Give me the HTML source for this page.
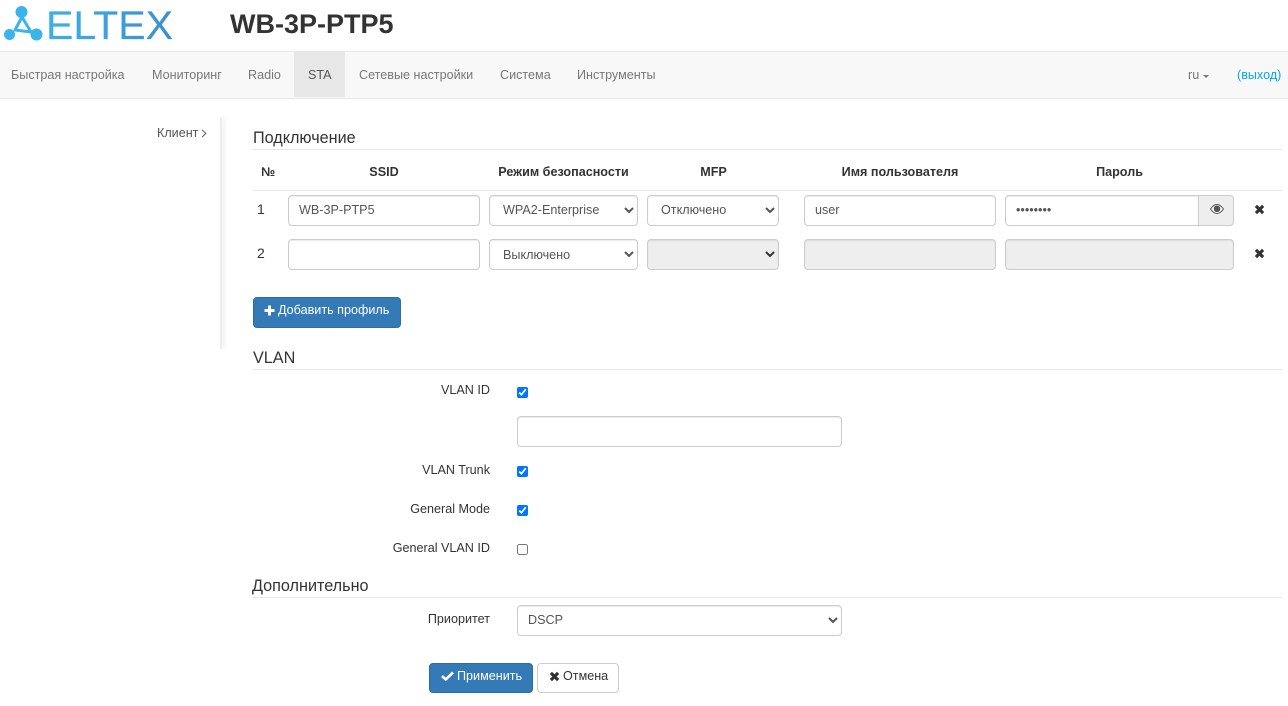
<!DOCTYPE html>
<html><head><meta charset="utf-8">
<style>
*{box-sizing:border-box}
html,body{margin:0;padding:0;background:#fff;width:1288px;height:706px;overflow:hidden}
body{font-family:"Liberation Sans",sans-serif;font-size:12.6px;color:#333;position:relative}
.a{position:absolute;white-space:nowrap}
.nav{position:absolute;left:0;top:51px;width:1288px;height:48px;background:#f8f8f8;border-top:1px solid #e7e7e7;border-bottom:1px solid #e7e7e7}
.n{position:absolute;top:67px;color:#777;line-height:16px}
.h{position:absolute;font-size:16.2px;line-height:18px;color:#333;white-space:nowrap}
.hr{position:absolute;left:253px;width:1029px;height:1px;background:#e5e5e5}
.th{position:absolute;top:164px;font-weight:bold;line-height:16px;text-align:center;white-space:nowrap}
.c{position:absolute;border:1px solid #ccc;border-radius:4px;background:#fff;box-shadow:inset 0 1px 1px rgba(0,0,0,.075);font:12.6px "Liberation Sans",sans-serif;color:#555;padding:0 10px;height:31px;margin:0;outline:0}
select.c{padding:0 9px}
select.c:disabled{opacity:1;color:#333}
.c.up{padding-bottom:2px}
.dis{background:#eee}
.l{position:absolute;right:798px;text-align:right;line-height:16px;white-space:nowrap}
input[type=checkbox]{position:absolute;left:517px;width:11px;height:11px;margin:0}
.x{position:absolute;left:1254px;width:11px;height:11px}
.btn{position:absolute;border-radius:4px;line-height:16px;white-space:nowrap}
.p{background:#337ab7;border:1px solid #2e6da4;color:#fff}
.num{position:absolute;left:257px;line-height:16px;font-size:14px}
</style></head><body>
<svg class="a" style="left:0;top:0" width="180" height="50" viewBox="0 0 180 50">
<defs><linearGradient id="g" x1="46" x2="174" y1="0" y2="0" gradientUnits="userSpaceOnUse"><stop offset="0" stop-color="#3fb0e8"/><stop offset="1" stop-color="#3a8fd0"/></linearGradient></defs>
<path d="M22 17L15 30L31 32Z" fill="none" stroke="#3bb4ec" stroke-width="3" stroke-linejoin="round"/>
<g fill="#3bb4ec"><circle cx="21.500" cy="12" r="6"/><circle cx="9.500" cy="34.500" r="5.500"/><circle cx="36.500" cy="34.500" r="6"/></g>
<text x="46" y="39" font-family="Liberation Sans" font-size="40" fill="url(#g)" stroke="url(#g)" stroke-width=".15" textLength="127" lengthAdjust="spacingAndGlyphs">ELTEX</text>
</svg>
<div class="a" style="left:230px;top:9px;font-size:27px;font-weight:bold;line-height:30px;color:#333">WB-3P-PTP5</div>

<div class="nav"></div>
<div class="a" style="left:294px;top:52px;width:51px;height:45px;background:#e7e7e7"></div>
<div class="n" style="left:11px">Быстрая настройка</div>
<div class="n" style="left:152px">Мониторинг</div>
<div class="n" style="left:248px">Radio</div>
<div class="n" style="left:308px;color:#555">STA</div>
<div class="n" style="left:359px">Сетевые настройки</div>
<div class="n" style="left:500px">Система</div>
<div class="n" style="left:577px">Инструменты</div>
<div class="n" style="left:1188px">ru</div>
<div class="a" style="left:1203px;top:75px;width:0;height:0;border-left:3.500px solid transparent;border-right:3.500px solid transparent;border-top:3.500px solid #777"></div>
<div class="n" style="left:1237px;color:#03a9f4">(выход)</div>

<div class="a" style="left:157px;top:125px;line-height:16px;color:#555">Клиент</div>
<svg class="a" style="left:201px;top:129px" width="6" height="9" viewBox="0 0 6 9"><path d="M1 .8L4.800 4.500L1 8.200" fill="none" stroke="#555" stroke-width="1"/></svg>
<div class="a" style="left:220px;top:117px;width:2px;height:232px;background:#eee;box-shadow:2px 0 4px rgba(0,0,0,.1)"></div>

<div class="h" style="left:253px;top:129px">Подключение</div>
<div class="hr" style="top:149px"></div>
<div class="th" style="left:261px">№</div>
<div class="th" style="left:288px;width:192px">SSID</div>
<div class="th" style="left:489px;width:149px">Режим безопасности</div>
<div class="th" style="left:647px;width:133px">MFP</div>
<div class="th" style="left:804px;width:192px">Имя пользователя</div>
<div class="th" style="left:1005px;width:229px">Пароль</div>
<div class="hr" style="top:190px"></div>

<div class="num" style="top:201px">1</div>
<input class="c up" style="left:288px;top:195px;width:192px" value="WB-3P-PTP5">
<select class="c up" style="left:489px;top:195px;width:149px"><option>WPA2-Enterprise</option></select>
<select class="c up" style="left:647px;top:195px;width:132px"><option>Отключено</option></select>
<input class="c up" style="left:804px;top:195px;width:192px" value="user">
<input class="c up" type="password" style="left:1005px;top:195px;width:194px;border-radius:4px 0 0 4px" value="12345678">
<div class="c dis" style="left:1198px;top:195px;width:36px;border-radius:0 4px 4px 0;box-shadow:none"></div>
<svg class="a" style="left:1210px;top:204px" width="14" height="10" viewBox="0 0 14 10"><path d="M.5 5C3 1.500 5 .5 7 .5S11 1.500 13.500 5C11 8.500 9 9.500 7 9.500S3 8.500 .5 5Z" fill="#fff" stroke="#555" stroke-width="1"/><circle cx="7" cy="4.800" r="3.300" fill="#555"/></svg>
<svg class="x" style="top:204px" viewBox="0 0 11 11"><path d="M1.500 3L3 1.500L5.500 4L8 1.500L9.500 3L7 5.500L9.500 8L8 9.500L5.500 7L3 9.500L1.500 8L4 5.500Z" fill="#333" stroke="#333" stroke-width="1"/></svg>

<div class="num" style="top:245px">2</div>
<input class="c" style="left:288px;top:239px;width:192px">
<select class="c" style="left:489px;top:239px;width:149px"><option>Выключено</option></select>
<select class="c dis" style="left:647px;top:239px;width:132px" disabled><option></option></select>
<input class="c dis" style="left:804px;top:239px;width:192px" disabled>
<input class="c dis" style="left:1005px;top:239px;width:229px" disabled>
<svg class="x" style="top:248px" viewBox="0 0 11 11"><path d="M1.500 3L3 1.500L5.500 4L8 1.500L9.500 3L7 5.500L9.500 8L8 9.500L5.500 7L3 9.500L1.500 8L4 5.500Z" fill="#333" stroke="#333" stroke-width="1"/></svg>

<div class="btn p" style="left:253px;top:297px;width:148px;height:31px"></div>
<svg class="a" style="left:264px;top:305px" width="11" height="11" viewBox="0 0 11 11"><path d="M4 .5H7V4H10.500V7H7V10.500H4V7H.5V4H4Z" fill="#fff"/></svg>
<div class="a" style="left:278px;top:302px;line-height:16px;color:#fff">Добавить профиль</div>

<div class="h" style="left:253px;top:349px">VLAN</div>
<div class="hr" style="top:369px"></div>
<div class="l" style="top:382px">VLAN ID</div>
<input type="checkbox" checked style="top:387px">
<input class="c" style="left:517px;top:416px;width:325px">
<div class="l" style="top:462px">VLAN Trunk</div>
<input type="checkbox" checked style="top:466px">
<div class="l" style="top:501px">General Mode</div>
<input type="checkbox" checked style="top:505px">
<div class="l" style="top:540px">General VLAN ID</div>
<input type="checkbox" style="top:544px">

<div class="h" style="left:252px;top:577px">Дополнительно</div>
<div class="hr" style="top:597px"></div>
<div class="l" style="top:611px">Приоритет</div>
<select class="c up" style="left:517px;top:605px;width:325px;padding-left:6px"><option>DSCP</option></select>

<div class="btn p" style="left:429px;top:663px;width:104px;height:30px"></div>
<svg class="a" style="left:441px;top:671px" width="13" height="10" viewBox="0 0 13 10"><path d="M1 5L4.700 8.500L12 1.500" fill="none" stroke="#fff" stroke-width="2.600"/></svg>
<div class="a" style="left:457px;top:668px;line-height:16px;color:#fff">Применить</div>
<div class="btn" style="left:537px;top:663px;width:82px;height:30px;border:1px solid #ccc;background:#fff"></div>
<svg class="a" style="left:549px;top:671px;width:11px;height:11px" viewBox="0 0 11 11"><path d="M1.500 3L3 1.500L5.500 4L8 1.500L9.500 3L7 5.500L9.500 8L8 9.500L5.500 7L3 9.500L1.500 8L4 5.500Z" fill="#333" stroke="#333" stroke-width="1"/></svg>
<div class="a" style="left:563px;top:668px;line-height:16px">Отмена</div>
</body></html>
